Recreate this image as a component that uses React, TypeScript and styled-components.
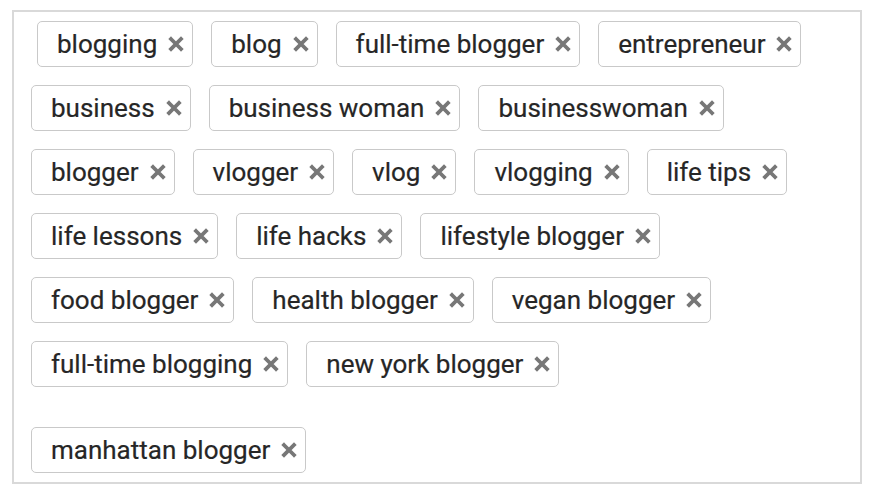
import styled, { createGlobalStyle } from "styled-components";

const rows: string[][] = [
  ["blogging", "blog", "full-time blogger", "entrepreneur"],
  ["business", "business woman", "businesswoman"],
  ["blogger", "vlogger", "vlog", "vlogging", "life tips"],
  ["life lessons", "life hacks", "lifestyle blogger"],
  ["food blogger", "health blogger", "vegan blogger"],
  ["full-time blogging", "new york blogger"],
  ["manhattan blogger"],
];

export default function App() {
  return (
    <>
      <GlobalStyle />
      <TagBox>
        {rows.map((row, i) => (
          <TagRow key={i} first={i === 0} last={i === rows.length - 1}>
            {row.map((tag) => (
              <Tag key={tag}>
                <TagLabel>{tag}</TagLabel>
                <RemoveIcon />
              </Tag>
            ))}
          </TagRow>
        ))}
      </TagBox>
    </>
  );
}

function RemoveIcon() {
  return (
    <RemoveButton aria-label="remove">
      <svg width="16" height="16" viewBox="0 0 16 16">
        <path
          d="M3 3 L13 13 M13 3 L3 13"
          stroke="#777777"
          strokeWidth="3.8"
          strokeLinecap="square"
          fill="none"
        />
      </svg>
    </RemoveButton>
  );
}

const GlobalStyle = createGlobalStyle`
  html, body {
    margin: 0;
    padding: 0;
    background: #ffffff;
  }
  body {
    font-family: Roboto, "Liberation Sans", sans-serif;
  }
`;

const TagBox = styled.div`
  box-sizing: border-box;
  width: 850px;
  height: 474px;
  margin: 10px 0 0 12px;
  border: 2px solid #d9d9d9;
  padding: 9px 17px;
  display: flex;
  flex-direction: column;
  gap: 18px;
`;

const TagRow = styled.div<{ first?: boolean; last?: boolean }>`
  display: flex;
  gap: 18px;
  padding-left: ${(p) => (p.first ? "6px" : "0")};
  margin-top: ${(p) => (p.last ? "22px" : "0")};
`;

const Tag = styled.div`
  box-sizing: border-box;
  height: 46px;
  display: flex;
  align-items: center;
  gap: 11px;
  padding: 0 8px 0 19px;
  border: 1.5px solid #c9c9c9;
  border-radius: 5px;
  background: #ffffff;
`;

const TagLabel = styled.span`
  font-size: 26px;
  color: #262626;
  line-height: 1;
  -webkit-text-stroke: 0.2px #262626;
`;

const RemoveButton = styled.span`
  display: flex;
  align-items: center;
  justify-content: center;
  width: 16px;
  height: 16px;
  cursor: pointer;
`;
